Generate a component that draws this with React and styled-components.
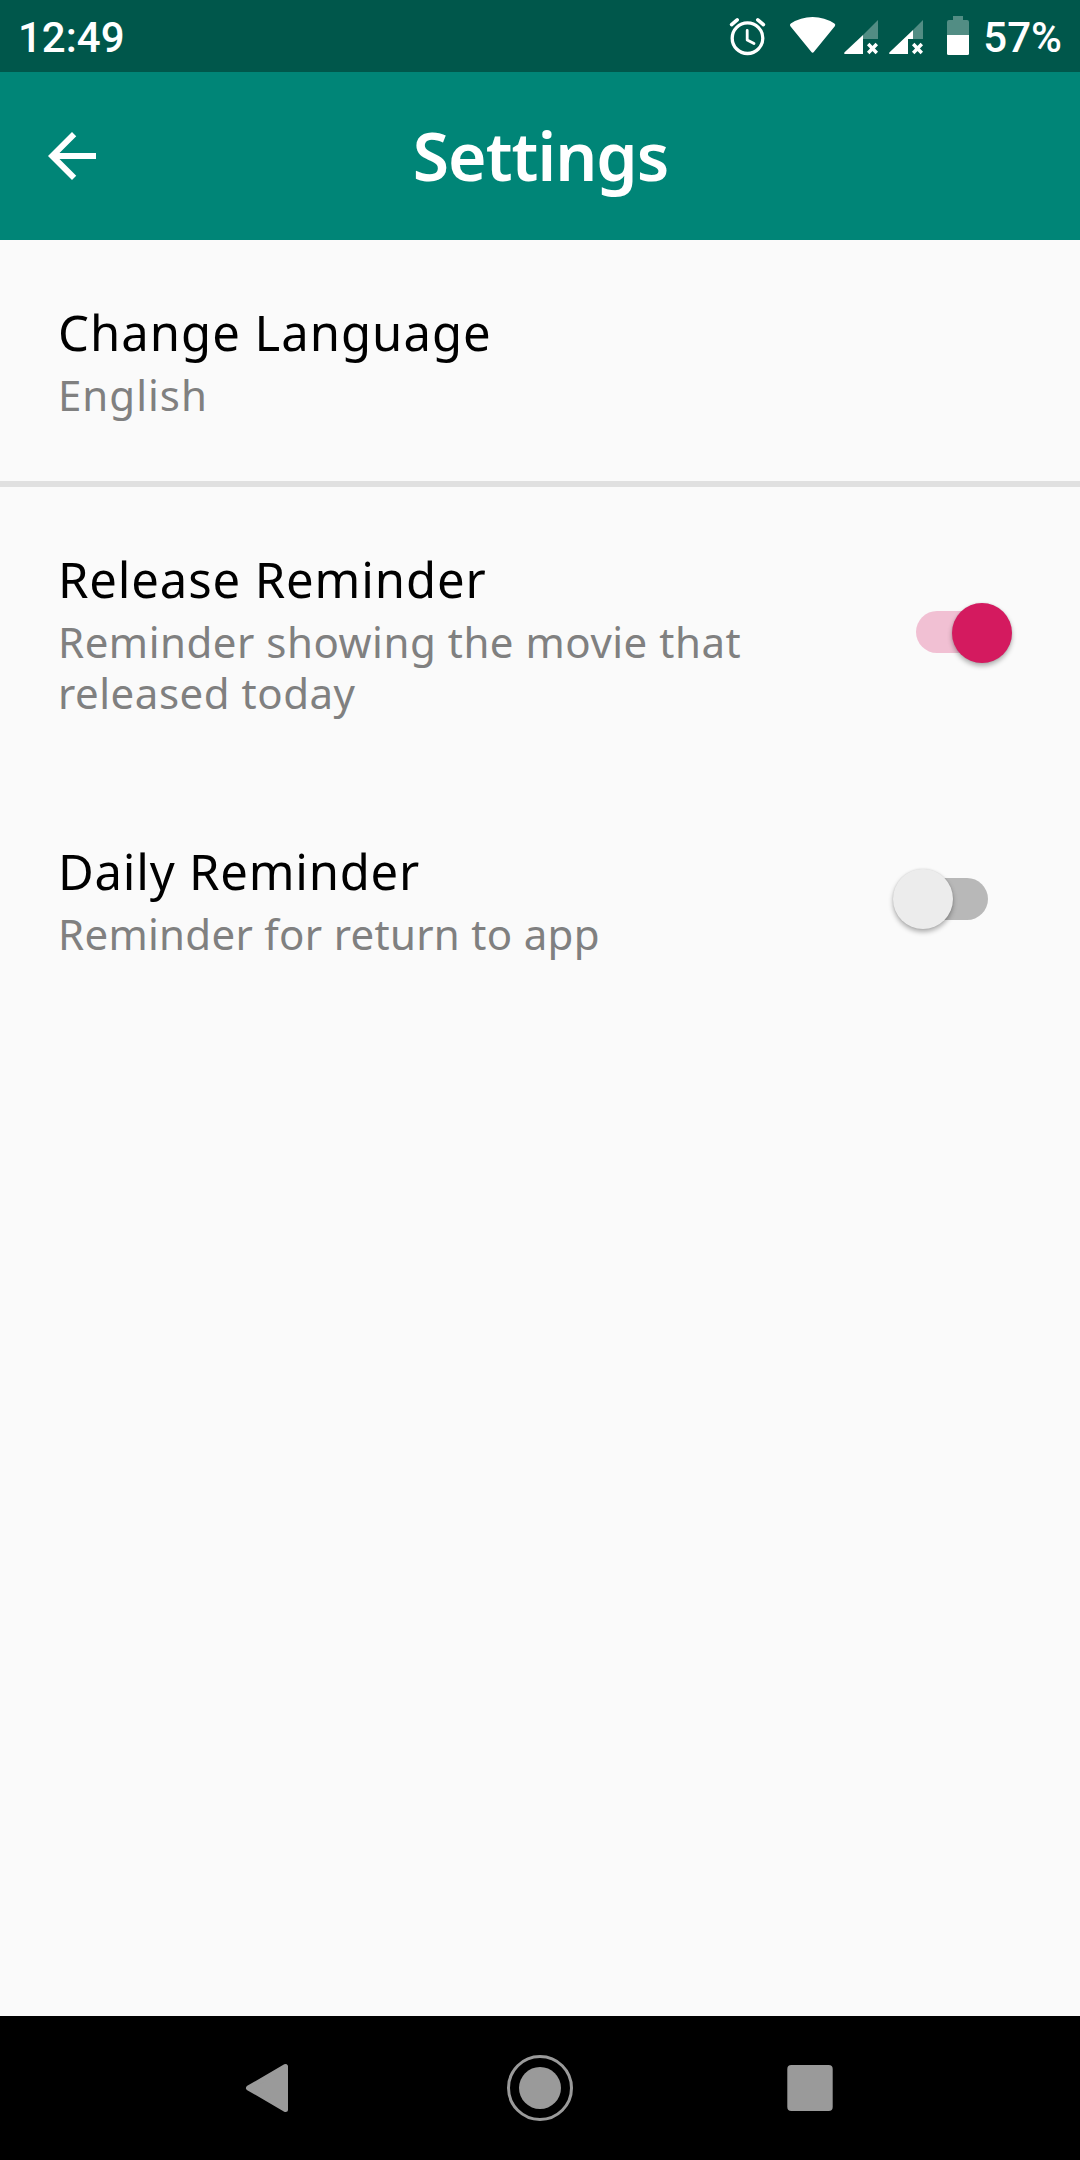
import React, { useState } from "react";
import styled, { createGlobalStyle } from "styled-components";

const GlobalStyle = createGlobalStyle`
  *, *::before, *::after { box-sizing: border-box; }
  html, body { margin: 0; padding: 0; background: #fafafa; }
`;

const Screen = styled.div`
  display: flex;
  flex-direction: column;
  width: 1080px;
  height: 2160px;
  overflow: hidden;
  background: #fafafa;
  font-family: "Noto Sans", "Open Sans", sans-serif;
`;

const StatusBar = styled.div`
  flex: none;
  display: flex;
  align-items: center;
  justify-content: space-between;
  height: 72px;
  padding: 0 18px;
  background: #00574b;
  color: #fff;
`;

const StatusText = styled.span`
  padding-top: 3px;
  font-family: Roboto, sans-serif;
  font-size: 42px;
  font-weight: 500;
  line-height: 72px;
  white-space: nowrap;
`;

const StatusGroup = styled.div`
  display: flex;
  align-items: center;
  gap: 14px;
`;

const StatusIcons = styled.svg`
  display: block;
  width: 240px;
  height: 72px;
`;

const Toolbar = styled.header`
  flex: none;
  display: grid;
  grid-template-columns: 72px 1fr 72px;
  align-items: center;
  height: 168px;
  padding: 0 36px;
  background: #008577;
  color: #fff;
`;

const BackButton = styled.button`
  display: flex;
  width: 72px;
  height: 72px;
  padding: 0;
  border: 0;
  background: none;
  color: inherit;

  svg {
    width: 72px;
    height: 72px;
    fill: currentColor;
  }
`;

const Title = styled.h1`
  margin: 0;
  padding: 0 0 3px 1px;
  font-size: 66px;
  font-weight: 600;
  line-height: 90px;
  letter-spacing: -0.95px;
  text-align: center;
`;

const List = styled.main`
  flex: 1;
  display: flex;
  flex-direction: column;
`;

const Row = styled.section`
  display: flex;
  align-items: center;
  justify-content: space-between;
  gap: 60px;
  padding: 62px 92px 61px 58px;
`;

const RowText = styled.div`
  display: flex;
  flex-direction: column;
  gap: 7px;
`;

const RowTitle = styled.div`
  color: #000;
  font-size: 49px;
  line-height: 60px;
  letter-spacing: ${(p) => p.$spacing}px;
`;

const RowSummary = styled.div`
  color: #808080;
  font-size: 42px;
  line-height: 51px;
  letter-spacing: ${(p) => p.$spacing}px;
`;

const Divider = styled.hr`
  flex: none;
  width: 100%;
  height: 6px;
  margin: 0;
  border: 0;
  background: #e0e0e0;
`;

const Track = styled.button`
  position: relative;
  flex: none;
  width: 72px;
  height: 42px;
  margin-bottom: 3px;
  padding: 0;
  border: 0;
  border-radius: 21px;
  background: ${(p) => (p.$on ? "#f1c0d3" : "#b8b8b8")};
`;

const Thumb = styled.span`
  position: absolute;
  top: -8.5px;
  left: ${(p) => (p.$on ? "35.5px" : "-23.5px")};
  width: 60px;
  height: 60px;
  border-radius: 50%;
  background: ${(p) => (p.$on ? "#d41a5f" : "#ececec")};
  box-shadow: 0 3px 5px rgba(0, 0, 0, 0.3), 0 0 2px rgba(0, 0, 0, 0.12);
`;

const NavBar = styled.nav`
  flex: none;
  display: grid;
  grid-template-columns: repeat(3, 270px);
  justify-content: center;
  justify-items: center;
  align-items: center;
  height: 144px;
  background: #000;

  svg {
    display: block;
    width: 72px;
    height: 72px;
  }
`;

function Signal({ x, edge, notch }) {
  return (
    <g transform={`translate(${x} 0)`}>
      <path d={`M${edge} ${54 - edge}L34 20V39H${edge}Z`} fill="#fff" fillOpacity="0.32" />
      <path
        d={`M1.2 54Q-0.8 53.6 0.6 52.2L${edge} ${54 - edge}V${edge > notch ? 39 : 54}H${notch}V54Z`}
        fill="#fff"
      />
      <path d="M24.2 44L32.8 53M32.8 44L24.2 53" stroke="#fff" strokeWidth="3.4" />
    </g>
  );
}

function StatusGlyphs() {
  return (
    <StatusIcons viewBox="729 0 240 72" aria-hidden="true">
      <g fill="none" stroke="#fff" strokeLinecap="round" strokeLinejoin="round">
        <circle cx="747.5" cy="38.2" r="15.3" strokeWidth="3.3" />
        <path d="M747.2 30.5V40L754 43.6" strokeWidth="2.8" />
        <path d="M731.6 24.6L737.2 19.8M763.4 24.6L757.8 19.8" strokeWidth="3.6" />
      </g>
      <path
        d="M790.4 26.2Q789.2 24.6 790.8 23.6Q800.5 17 812.6 17T834.4 23.6Q836 24.6 834.8 26.2L814 51.8Q812.6 53.6 811.2 51.8Z"
        fill="#fff"
      />
      <Signal x={844} edge={19} notch={19} />
      <Signal x={889} edge={24} notch={19} />
      <path d="M947 35V22Q947 20 949 20H953V16H963V20H967Q969 20 969 22V35Z" fill="#fff" fillOpacity="0.32" />
      <path d="M947 35H969V53.5Q969 55 967.5 55H948.5Q947 55 947 53.5Z" fill="#fff" />
    </StatusIcons>
  );
}

function Switch({ initial, label }) {
  const [on, setOn] = useState(initial);
  return (
    <Track type="button" role="switch" aria-checked={on} aria-label={label} $on={on} onClick={() => setOn(!on)}>
      <Thumb $on={on} />
    </Track>
  );
}

function Setting({ title, summary, titleSpacing, summarySpacing, children }) {
  return (
    <Row>
      <RowText>
        <RowTitle $spacing={titleSpacing}>{title}</RowTitle>
        <RowSummary $spacing={summarySpacing}>{summary}</RowSummary>
      </RowText>
      {children}
    </Row>
  );
}

export default function App() {
  return (
    <Screen>
      <GlobalStyle />
      <StatusBar>
        <StatusText>12:49</StatusText>
        <StatusGroup>
          <StatusGlyphs />
          <StatusText>57%</StatusText>
        </StatusGroup>
      </StatusBar>
      <Toolbar>
        <BackButton type="button" aria-label="Back">
          <svg viewBox="0 0 24 24">
            <path d="M20 11H7.83l5.59-5.59L12 4l-8 8 8 8 1.41-1.41L7.83 13H20z" />
          </svg>
        </BackButton>
        <Title>Settings</Title>
      </Toolbar>
      <List>
        <Setting title="Change Language" titleSpacing={1} summary="English" summarySpacing={1} />
        <Divider />
        <Setting
          title="Release Reminder"
          titleSpacing={0.87}
          summary="Reminder showing the movie that released today"
          summarySpacing={0.52}
        >
          <Switch initial={true} label="Release Reminder" />
        </Setting>
        <Setting
          title="Daily Reminder"
          titleSpacing={0.78}
          summary="Reminder for return to app"
          summarySpacing={0.3}
        >
          <Switch initial={false} label="Daily Reminder" />
        </Setting>
      </List>
      <NavBar>
        <svg viewBox="0 0 72 72">
          <path
            d="M14.5 36L51.5 14.5V57.5Z"
            fill="#9a9a9a"
            stroke="#9a9a9a"
            strokeWidth="5"
            strokeLinejoin="round"
          />
        </svg>
        <svg viewBox="0 0 72 72">
          <circle cx="36" cy="36" r="31.5" fill="none" stroke="#9a9a9a" strokeWidth="3" />
          <circle cx="36" cy="36" r="21" fill="#9a9a9a" />
        </svg>
        <svg viewBox="0 0 72 72">
          <rect x="13.3" y="13" width="45.4" height="46" rx="4" fill="#9a9a9a" />
        </svg>
      </NavBar>
    </Screen>
  );
}
